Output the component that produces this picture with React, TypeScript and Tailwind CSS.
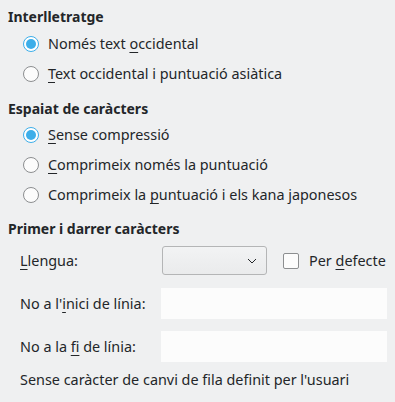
import type { ReactNode } from 'react'

const font = { fontFamily: '"Noto Sans", "Open Sans", sans-serif' }

const Radio = ({ checked, children }: { checked?: boolean; children: ReactNode }) => {
  return (
    <div className="flex h-[30px] items-center">
      <div className="ml-[15px] flex h-[16px] w-[16px] items-center justify-center">
        {checked ? (
          <span className="flex h-[16px] w-[16px] items-center justify-center rounded-full border border-[#3daee9] bg-white">
            <span className="h-[10px] w-[10px] rounded-full bg-[#3daee9]" />
          </span>
        ) : (
          <span className="h-[16px] w-[16px] rounded-full border border-[#8c8e90] bg-[#fcfcfc]" />
        )}
      </div>
      <span className="ml-[9px] text-[14.4px] text-[#232629]">{children}</span>
    </div>
  )
}

const U = ({ children }: { children: ReactNode }) => (
  <span className="underline underline-offset-[3px]">{children}</span>
)

export default function App() {
  return (
    <div className="h-[402px] w-[395px] bg-[#eff0f1] text-[#232629]" style={font}>
      <div className="px-[8px] pt-[6px]">
        <div className="h-[22px] text-[14px] font-bold leading-[22px]">Interlletratge</div>
        <div className="mt-[1px]">
          <Radio checked>
            Només text <U>o</U>ccidental
          </Radio>
          <Radio>
            <U>T</U>ext occidental i puntuació asiàtica
          </Radio>
        </div>

        <div className="mt-[9px] h-[22px] text-[14px] font-bold leading-[22px]">Espaiat de caràcters</div>
        <div>
          <Radio checked>
            <U>S</U>ense compressió
          </Radio>
          <Radio>
            <U>C</U>omprimeix només la puntuació
          </Radio>
          <Radio>
            Comprimeix la <U>p</U>untuació i els kana japonesos
          </Radio>
        </div>

        <div className="mt-[8px] h-[22px] text-[14px] font-bold leading-[22px]">Primer i darrer caràcters</div>

        <div className="mt-[6px] flex h-[29px] items-center">
          <span className="ml-[12px] w-[142px] text-[14.4px]">
            <U>L</U>lengua:
          </span>
          <div className="flex h-[29px] w-[105px] items-center justify-end rounded-[3px] border border-[#b4b5b6] bg-gradient-to-b from-[#f2f3f4] to-[#eaebec] pr-[9px]">
            <svg width="10" height="6" viewBox="0 0 10 6">
              <path d="M1 1 L5 5 L9 1" fill="none" stroke="#232629" strokeWidth="1" />
            </svg>
          </div>
          <span className="ml-[16px] h-[16px] w-[16px] rounded-[2px] border border-[#8c8e90] bg-[#fcfcfc]" />
          <span className="ml-[10px] text-[14.4px]">
            Per <U>d</U>efecte
          </span>
        </div>

        <div className="mt-[13px] flex h-[31px] items-center">
          <span className="ml-[12px] w-[141px] text-[14.4px]">
            No a l'<U>i</U>nici de línia:
          </span>
          <div className="h-[31px] w-[226px] bg-[#fcfcfc]" />
        </div>

        <div className="mt-[12px] flex h-[31px] items-center">
          <span className="ml-[12px] w-[141px] text-[14.4px]">
            No a la <U>fi</U> de línia:
          </span>
          <div className="h-[31px] w-[226px] bg-[#fcfcfc]" />
        </div>

        <div className="mt-[7px] ml-[12px] text-[14.4px] leading-[22px]">
          Sense caràcter de canvi de fila definit per l'usuari
        </div>
      </div>
    </div>
  )
}
